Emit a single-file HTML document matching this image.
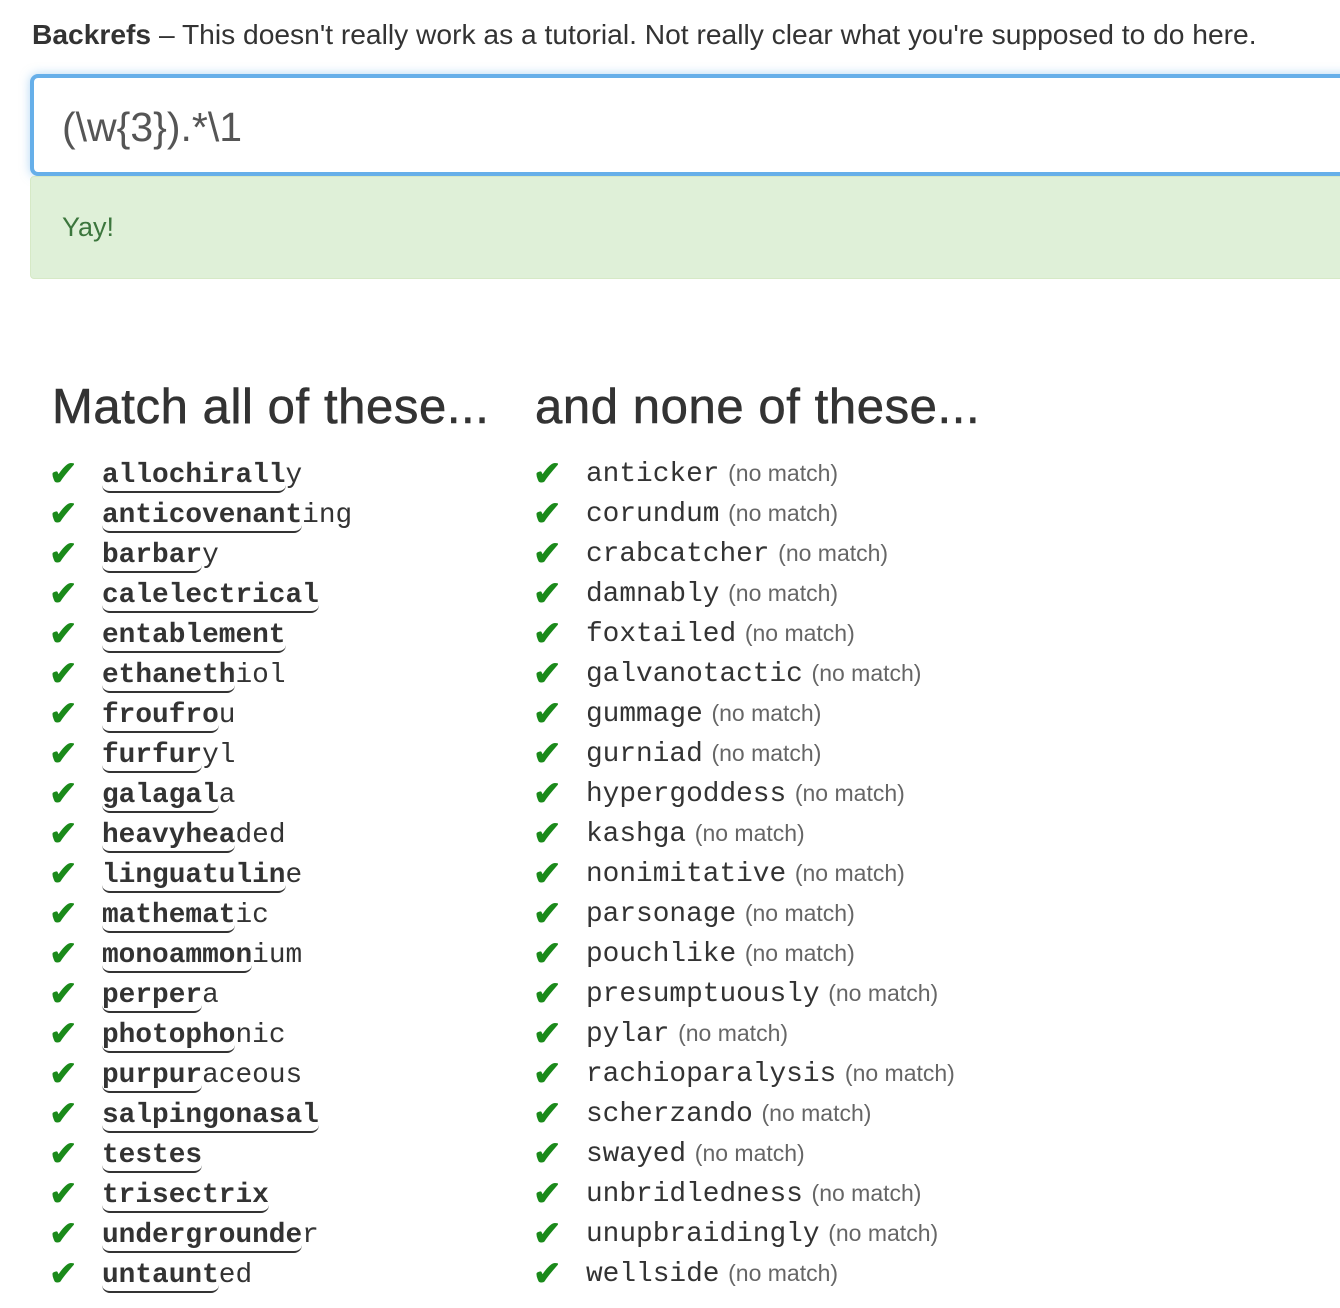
<!DOCTYPE html>
<html><head><meta charset="utf-8"><style>
html,body{margin:0;padding:0;background:#fff;width:1340px;height:1308px;overflow:hidden;position:relative}
body{font-family:"Liberation Sans",Arial,sans-serif;color:#333}
.title{position:absolute;left:32px;top:16px;font-size:28.2px;line-height:36px;color:#333;white-space:nowrap}
.inp{position:absolute;left:30px;top:74px;width:1340px;height:94px;border:4px solid #66afe9;border-radius:8px;box-shadow:0 0 10px rgba(102,175,233,.5);background:#fff}
.inp span{position:absolute;left:28px;top:24px;font-size:41px;line-height:50px;color:#555}
.alert{position:absolute;left:30px;top:176px;width:1340px;height:101px;background:#dff0d8;border:1px solid #d6e9c6;border-radius:4px}
.alert span{position:absolute;left:31px;top:34px;font-size:27px;line-height:32px;color:#3c763d}
h2{position:absolute;margin:0;top:379px;font-size:49px;line-height:56px;font-weight:normal;color:#333;white-space:nowrap;letter-spacing:0.6px;-webkit-text-stroke:0.6px #333}
.col{position:absolute;top:456px}
.row{height:40px;line-height:40px;white-space:nowrap;position:relative}
.ck{position:absolute;left:-1px;top:-2px;color:#1a8a1a;font-size:34px;font-family:"DejaVu Sans",sans-serif;-webkit-text-stroke:1px #1a8a1a}
.r .ck{top:1px}
.w{position:absolute;left:52px;top:0;font-family:"Liberation Mono","Courier New",monospace;font-size:27.8px;color:#333}
.w b{border-bottom:2px solid #333;border-radius:0 0 8px 8px;display:inline-block;line-height:30px}
.nm{font-family:"Liberation Sans",sans-serif;font-size:23px;color:#666;margin-left:-8px}
</style></head><body>
<div class="title"><b>Backrefs</b> – This doesn't really work as a tutorial. Not really clear what you're supposed to do here.</div>
<div class="inp"><span>(\w{3}).*\1</span></div>
<div class="alert"><span>Yay!</span></div>
<h2 style="left:52px">Match all of these...</h2>
<h2 style="left:535px">and none of these...</h2>
<div class="col" style="left:50px">
<div class="row"><span class="ck">✔</span><span class="w"><b>allochirall</b>y</span></div>
<div class="row"><span class="ck">✔</span><span class="w"><b>anticovenant</b>ing</span></div>
<div class="row"><span class="ck">✔</span><span class="w"><b>barbar</b>y</span></div>
<div class="row"><span class="ck">✔</span><span class="w"><b>calelectrical</b></span></div>
<div class="row"><span class="ck">✔</span><span class="w"><b>entablement</b></span></div>
<div class="row"><span class="ck">✔</span><span class="w"><b>ethaneth</b>iol</span></div>
<div class="row"><span class="ck">✔</span><span class="w"><b>froufro</b>u</span></div>
<div class="row"><span class="ck">✔</span><span class="w"><b>furfur</b>yl</span></div>
<div class="row"><span class="ck">✔</span><span class="w"><b>galagal</b>a</span></div>
<div class="row"><span class="ck">✔</span><span class="w"><b>heavyhea</b>ded</span></div>
<div class="row"><span class="ck">✔</span><span class="w"><b>linguatulin</b>e</span></div>
<div class="row"><span class="ck">✔</span><span class="w"><b>mathemat</b>ic</span></div>
<div class="row"><span class="ck">✔</span><span class="w"><b>monoammon</b>ium</span></div>
<div class="row"><span class="ck">✔</span><span class="w"><b>perper</b>a</span></div>
<div class="row"><span class="ck">✔</span><span class="w"><b>photopho</b>nic</span></div>
<div class="row"><span class="ck">✔</span><span class="w"><b>purpur</b>aceous</span></div>
<div class="row"><span class="ck">✔</span><span class="w"><b>salpingonasal</b></span></div>
<div class="row"><span class="ck">✔</span><span class="w"><b>testes</b></span></div>
<div class="row"><span class="ck">✔</span><span class="w"><b>trisectrix</b></span></div>
<div class="row"><span class="ck">✔</span><span class="w"><b>undergrounde</b>r</span></div>
<div class="row"><span class="ck">✔</span><span class="w"><b>untaunt</b>ed</span></div>
</div>
<div class="col r" style="left:534px;top:453px">
<div class="row"><span class="ck">✔</span><span class="w">anticker <span class="nm">(no match)</span></span></div>
<div class="row"><span class="ck">✔</span><span class="w">corundum <span class="nm">(no match)</span></span></div>
<div class="row"><span class="ck">✔</span><span class="w">crabcatcher <span class="nm">(no match)</span></span></div>
<div class="row"><span class="ck">✔</span><span class="w">damnably <span class="nm">(no match)</span></span></div>
<div class="row"><span class="ck">✔</span><span class="w">foxtailed <span class="nm">(no match)</span></span></div>
<div class="row"><span class="ck">✔</span><span class="w">galvanotactic <span class="nm">(no match)</span></span></div>
<div class="row"><span class="ck">✔</span><span class="w">gummage <span class="nm">(no match)</span></span></div>
<div class="row"><span class="ck">✔</span><span class="w">gurniad <span class="nm">(no match)</span></span></div>
<div class="row"><span class="ck">✔</span><span class="w">hypergoddess <span class="nm">(no match)</span></span></div>
<div class="row"><span class="ck">✔</span><span class="w">kashga <span class="nm">(no match)</span></span></div>
<div class="row"><span class="ck">✔</span><span class="w">nonimitative <span class="nm">(no match)</span></span></div>
<div class="row"><span class="ck">✔</span><span class="w">parsonage <span class="nm">(no match)</span></span></div>
<div class="row"><span class="ck">✔</span><span class="w">pouchlike <span class="nm">(no match)</span></span></div>
<div class="row"><span class="ck">✔</span><span class="w">presumptuously <span class="nm">(no match)</span></span></div>
<div class="row"><span class="ck">✔</span><span class="w">pylar <span class="nm">(no match)</span></span></div>
<div class="row"><span class="ck">✔</span><span class="w">rachioparalysis <span class="nm">(no match)</span></span></div>
<div class="row"><span class="ck">✔</span><span class="w">scherzando <span class="nm">(no match)</span></span></div>
<div class="row"><span class="ck">✔</span><span class="w">swayed <span class="nm">(no match)</span></span></div>
<div class="row"><span class="ck">✔</span><span class="w">unbridledness <span class="nm">(no match)</span></span></div>
<div class="row"><span class="ck">✔</span><span class="w">unupbraidingly <span class="nm">(no match)</span></span></div>
<div class="row"><span class="ck">✔</span><span class="w">wellside <span class="nm">(no match)</span></span></div>
</div>
</body></html>
